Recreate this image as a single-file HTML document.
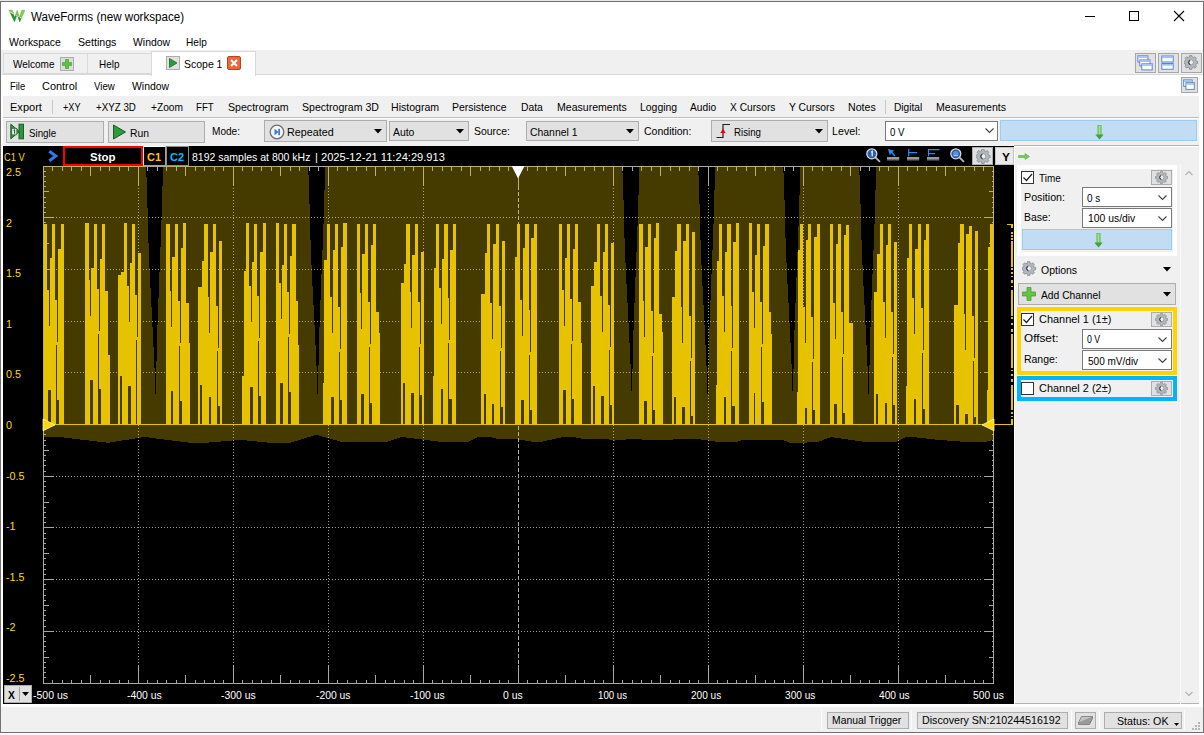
<!DOCTYPE html>
<html><head><meta charset="utf-8"><title>WaveForms (new workspace)</title>
<style>
html,body{margin:0;padding:0;background:#fff;}
body{width:1204px;height:735px;position:relative;overflow:hidden;font-family:"Liberation Sans",sans-serif;}
.b{position:absolute;display:block;}
.t{position:absolute;white-space:pre;display:block;transform-origin:0 0;}
</style></head><body>
<div class="b" style="left:0px;top:0px;width:1204px;height:735px;background:#fff;"></div>
<div class="b" style="left:0px;top:0px;width:1204px;height:1px;background:#e8e8e8;"></div>
<div class="b" style="left:0px;top:1px;width:1204px;height:732px;border:1px solid #707070;box-sizing:border-box;"></div>
<svg class="b" style="left:8px;top:8px;" width="18" height="16" viewBox="0 0 18 16"><defs><clipPath id="wc"><path d="M1 2.200L4.400 2.200L6.600 9.500L9.100 2.200L11.600 9.500L13.800 2.200L16.900 2.200L11.700 14L9.100 6.500L6.500 14Z"/></clipPath></defs><g clip-path="url(#wc)"><rect x="0" y="0" width="18" height="16" fill="#86d238"/><path d="M0 3L18 12.500L18 16L0 16Z" fill="#1f9442"/><path d="M0 3L18 12.500" stroke="#f2fbe8" stroke-width="0.900"/></g><path d="M1 2.200L4.400 2.200L6.600 9.500L9.100 2.200L11.600 9.500L13.800 2.200L16.900 2.200L11.700 14L9.100 6.500L6.500 14Z" fill="none" stroke="#4f7f4a" stroke-width="0.500" stroke-opacity="0.700"/></svg>
<span class="t" style="left:30.70px;top:9.80px;font-size:12px;line-height:14px;color:#000;transform:scaleX(0.9677);">WaveForms (new workspace)</span>
<div class="b" style="left:1085px;top:16px;width:10px;height:1px;background:#000;"></div>
<div class="b" style="left:1129px;top:11px;width:10px;height:10px;border:1px solid #000;box-sizing:border-box;"></div>
<svg class="b" style="left:1173px;top:10px;" width="12" height="12" viewBox="0 0 12 12"><path d="M1 1 L11 11 M11 1 L1 11" stroke="#000" stroke-width="1.1" fill="none"/></svg>
<span class="t" style="left:9.10px;top:35.70px;font-size:11px;line-height:12px;color:#000;transform:scaleX(0.9455);">Workspace</span>
<span class="t" style="left:77.70px;top:35.70px;font-size:11px;line-height:12px;color:#000;transform:scaleX(0.9650);">Settings</span>
<span class="t" style="left:132.90px;top:35.70px;font-size:11px;line-height:12px;color:#000;transform:scaleX(0.9462);">Window</span>
<span class="t" style="left:186.40px;top:35.70px;font-size:11px;line-height:12px;color:#000;transform:scaleX(0.9174);">Help</span>
<div class="b" style="left:1px;top:50px;width:1202px;height:25px;background:#f0f0f0;"></div>
<div class="b" style="left:3px;top:53px;width:85px;height:21px;background:#f0f0f0;border:1px solid #d9d9d9;box-sizing:border-box;"></div>
<div class="b" style="left:87px;top:53px;width:65px;height:21px;background:#f0f0f0;border:1px solid #d9d9d9;box-sizing:border-box;"></div>
<div class="b" style="left:151px;top:51px;width:105px;height:25px;background:#fff;border:1px solid #d9d9d9;box-sizing:border-box;border-bottom:none;"></div>
<div class="b" style="left:256px;top:74px;width:946px;height:1px;background:#d9d9d9;"></div>
<div class="b" style="left:2px;top:74px;width:150px;height:1px;background:#d9d9d9;"></div>
<span class="t" style="left:13.00px;top:58.10px;font-size:11px;line-height:12px;color:#000;transform:scaleX(0.9087);">Welcome</span>
<div class="b" style="left:60px;top:57px;width:14px;height:14px;background:#dcdcdc;border:1px solid #adadad;box-sizing:border-box;"></div>
<svg class="b" style="left:61px;top:58px;" width="12" height="12" viewBox="0 0 12 12"><path d="M4.5 1.5h3v3h3v3h-3v3h-3v-3h-3v-3h3z" fill="#5cc043" stroke="#3d9a2a" stroke-width="0.6"/></svg>
<span class="t" style="left:99.20px;top:58.10px;font-size:11px;line-height:12px;color:#000;transform:scaleX(0.9043);">Help</span>
<div class="b" style="left:166px;top:56px;width:14px;height:14px;background:#e1e1e1;border:1px solid #adadad;box-sizing:border-box;"></div>
<svg class="b" style="left:167px;top:57px;" width="12" height="12" viewBox="0 0 12 12"><path d="M2.5 1.5 L10 6 L2.5 10.5Z" fill="#2f9a3b" stroke="#1c6b27" stroke-width="0.8"/></svg>
<span class="t" style="left:184.40px;top:58.10px;font-size:11px;line-height:12px;color:#000;transform:scaleX(0.9525);">Scope 1</span>
<div class="b" style="left:227px;top:56px;width:14px;height:14px;background:#e9683c;border:1px solid #b8431f;box-sizing:border-box;border-radius:2px;"></div>
<svg class="b" style="left:228px;top:57px;" width="12" height="12" viewBox="0 0 12 12"><path d="M3 3 L9 9 M9 3 L3 9" stroke="#fff" stroke-width="2" fill="none"/></svg>
<div class="b" style="left:1135px;top:53px;width:21px;height:20px;background:#e1e1e1;border:1px solid #a6a6a6;box-sizing:border-box;"></div>
<svg class="b" style="left:1135px;top:53px;" width="21" height="20" viewBox="0 0 21 20"><rect x="2.9" y="2.8" width="10" height="6.3" fill="#fff" stroke="#5a86d2" stroke-width="1"/><rect x="3.4" y="3.3" width="9" height="1.600" fill="#9dbfee"/><rect x="4.8" y="6.9" width="10.2" height="6" fill="#fff" stroke="#5a86d2" stroke-width="1"/><rect x="5.3" y="7.4" width="9.2" height="1.600" fill="#9dbfee"/><rect x="6.8" y="10.8" width="10.4" height="6.1" fill="#fff" stroke="#5a86d2" stroke-width="1"/><rect x="7.3" y="11.3" width="9.4" height="1.600" fill="#9dbfee"/></svg>
<div class="b" style="left:1158px;top:53px;width:21px;height:20px;background:#e1e1e1;border:1px solid #a6a6a6;box-sizing:border-box;"></div>
<svg class="b" style="left:1158px;top:53px;" width="21" height="20" viewBox="0 0 21 20"><rect x="3.8" y="3" width="11.4" height="6" fill="#fff" stroke="#5a86d2" stroke-width="1"/><rect x="4.3" y="3.5" width="10.4" height="1.600" fill="#9dbfee"/><rect x="3.8" y="10.5" width="11.4" height="5.8" fill="#fff" stroke="#5a86d2" stroke-width="1"/><rect x="4.3" y="11" width="10.4" height="1.600" fill="#9dbfee"/></svg>
<div class="b" style="left:1181px;top:53px;width:21px;height:20px;background:#e1e1e1;border:1px solid #a6a6a6;box-sizing:border-box;"></div>
<svg class="b" style="left:1183.5px;top:55px;" width="15" height="15" viewBox="0 0 15 15"><g transform="translate(0.3,0.2) scale(0.92)"><path d="M5.800 0.300h2.400l.4 1.800 1.300.55 1.600-1 1.700 1.700-1 1.600.55 1.300 1.800.4v2.400l-1.800.4-.55 1.300 1 1.600-1.700 1.700-1.600-1-1.300.55-.4 1.800H5.800l-.4-1.800-1.300-.55-1.600 1-1.700-1.700 1-1.600-.55-1.300-1.800-.4V6.650l1.800-.4.550-1.300-1-1.600 1.700-1.700 1.600 1 1.300-.55z" fill="#b4b8bd" stroke="#80868d" stroke-width="0.800"/><circle cx="7" cy="7.700" r="2.900" fill="#eceef0" stroke="#7a8087" stroke-width="0.700"/><path d="M6.200 5.200a2.800 2.800 0 0 0 0.300 5.200a3.600 3.600 0 0 1 -0.300 -5.200z" fill="#3c4650" stroke="#3c4650" stroke-width="0.900"/></g></svg>
<span class="t" style="left:10.30px;top:79.70px;font-size:11px;line-height:12px;color:#000;transform:scaleX(0.8556);">File</span>
<span class="t" style="left:42.40px;top:79.70px;font-size:11px;line-height:12px;color:#000;transform:scaleX(0.9943);">Control</span>
<span class="t" style="left:93.90px;top:79.70px;font-size:11px;line-height:12px;color:#000;transform:scaleX(0.8792);">View</span>
<span class="t" style="left:132.00px;top:79.70px;font-size:11px;line-height:12px;color:#000;transform:scaleX(0.9487);">Window</span>
<div class="b" style="left:1181px;top:77px;width:17px;height:16px;background:#e1e1e1;border:1px solid #a6a6a6;box-sizing:border-box;"></div>
<svg class="b" style="left:1181px;top:77px;" width="17" height="16" viewBox="0 0 17 16"><rect x="2.7" y="2.9" width="8.4" height="6.5" fill="#fff" stroke="#5a86d2" stroke-width="1"/><rect x="3.2" y="3.4" width="7.4" height="1.600" fill="#9dbfee"/><rect x="4.9" y="5.7" width="8.4" height="6.7" fill="#fff" stroke="#5a86d2" stroke-width="1"/><rect x="5.4" y="6.2" width="7.4" height="1.600" fill="#9dbfee"/></svg>
<div class="b" style="left:3px;top:96px;width:1196px;height:21px;background:#f0f0f0;"></div>
<div class="b" style="left:3px;top:117px;width:1196px;height:1px;background:#bdbdbd;"></div>
<div class="b" style="left:3px;top:118px;width:1196px;height:28px;background:#f0f0f0;"></div>
<div class="b" style="left:3px;top:118px;width:1196px;height:1px;background:#fff;"></div>
<span class="t" style="left:10.30px;top:100.50px;font-size:11px;line-height:12px;color:#000;transform:scaleX(1.0031);">Export</span>
<span class="t" style="left:63.10px;top:100.50px;font-size:11px;line-height:12px;color:#000;transform:scaleX(0.8318);">+XY</span>
<span class="t" style="left:96.00px;top:100.50px;font-size:11px;line-height:12px;color:#000;transform:scaleX(0.8867);">+XYZ 3D</span>
<span class="t" style="left:150.80px;top:100.50px;font-size:11px;line-height:12px;color:#000;transform:scaleX(0.9257);">+Zoom</span>
<span class="t" style="left:196.40px;top:100.50px;font-size:11px;line-height:12px;color:#000;transform:scaleX(0.8750);">FFT</span>
<span class="t" style="left:227.50px;top:100.50px;font-size:11px;line-height:12px;color:#000;transform:scaleX(0.9635);">Spectrogram</span>
<span class="t" style="left:301.50px;top:100.50px;font-size:11px;line-height:12px;color:#000;transform:scaleX(0.9600);">Spectrogram 3D</span>
<span class="t" style="left:391.30px;top:100.50px;font-size:11px;line-height:12px;color:#000;transform:scaleX(0.9600);">Histogram</span>
<span class="t" style="left:452.00px;top:100.50px;font-size:11px;line-height:12px;color:#000;transform:scaleX(0.9500);">Persistence</span>
<span class="t" style="left:520.50px;top:100.50px;font-size:11px;line-height:12px;color:#000;transform:scaleX(0.9375);">Data</span>
<span class="t" style="left:556.50px;top:100.50px;font-size:11px;line-height:12px;color:#000;transform:scaleX(0.9589);">Measurements</span>
<span class="t" style="left:639.50px;top:100.50px;font-size:11px;line-height:12px;color:#000;transform:scaleX(0.9487);">Logging</span>
<span class="t" style="left:690.00px;top:100.50px;font-size:11px;line-height:12px;color:#000;transform:scaleX(0.9286);">Audio</span>
<span class="t" style="left:729.50px;top:100.50px;font-size:11px;line-height:12px;color:#000;transform:scaleX(0.9286);">X Cursors</span>
<span class="t" style="left:788.50px;top:100.50px;font-size:11px;line-height:12px;color:#000;transform:scaleX(0.9388);">Y Cursors</span>
<span class="t" style="left:847.50px;top:100.50px;font-size:11px;line-height:12px;color:#000;transform:scaleX(0.9655);">Notes</span>
<span class="t" style="left:894.40px;top:100.50px;font-size:11px;line-height:12px;color:#000;transform:scaleX(0.9226);">Digital</span>
<span class="t" style="left:936.20px;top:100.50px;font-size:11px;line-height:12px;color:#000;transform:scaleX(0.9630);">Measurements</span>
<div class="b" style="left:52px;top:100px;width:1px;height:14px;background:#c8c8c8;"></div>
<div class="b" style="left:885px;top:100px;width:1px;height:14px;background:#c8c8c8;"></div>
<div class="b" style="left:6px;top:121px;width:98px;height:22px;background:#e1e1e1;border:1px solid #adadad;box-sizing:border-box;"></div>
<svg class="b" style="left:10px;top:123px;" width="15" height="17" viewBox="0 0 15 17"><path d="M0.800 1.200 L9.500 8.500 L0.800 15.800Z" fill="#2f9440" stroke="#1d5e29" stroke-width="1"/><rect x="9" y="1.200" width="4.500" height="14.600" fill="#2f9440" stroke="#1d5e29" stroke-width="1"/><rect x="1.800" y="5.500" width="5" height="6.300" fill="#e4efe5" stroke="#2a5a33" stroke-width="0.600"/><path d="M3.600 7.300l1-.6v4" stroke="#1a3a20" stroke-width="0.900" fill="none"/></svg>
<span class="t" style="left:28.60px;top:126.50px;font-size:11px;line-height:12px;color:#000;transform:scaleX(0.8871);">Single</span>
<div class="b" style="left:108px;top:121px;width:97px;height:22px;background:#e1e1e1;border:1px solid #adadad;box-sizing:border-box;"></div>
<svg class="b" style="left:112px;top:124px;" width="15" height="16" viewBox="0 0 15 16"><path d="M1.5 1 L13.5 8 L1.5 15Z" fill="#2f9a3b" stroke="#1a5a24" stroke-width="1"/></svg>
<span class="t" style="left:130.40px;top:126.50px;font-size:11px;line-height:12px;color:#000;transform:scaleX(0.9400);">Run</span>
<span class="t" style="left:212.00px;top:124.90px;font-size:11px;line-height:12px;color:#000;transform:scaleX(0.9161);">Mode:</span>
<div class="b" style="left:264px;top:120px;width:123px;height:22px;background:#e1e1e1;border:1px solid #adadad;box-sizing:border-box;"></div>
<svg class="b" style="left:269px;top:124px;" width="16" height="16" viewBox="0 0 16 16"><circle cx="8" cy="8" r="6.8" fill="#f4f6fa" stroke="#6a6f78" stroke-width="1.3"/><path d="M5.5 4.800 L9.500 8 L5.500 11.200Z" fill="#3b7bd6"/><rect x="9.3" y="4.800" width="1.700" height="6.400" fill="#3b7bd6"/></svg>
<span class="t" style="left:287.20px;top:125.50px;font-size:11px;line-height:12px;color:#000;transform:scaleX(0.9771);">Repeated</span>
<svg class="b" style="left:373.5px;top:129px;" width="8" height="5" viewBox="0 0 8 5"><path d="M0 0h8l-4 4.500z" fill="#000"/></svg>
<div class="b" style="left:389px;top:121px;width:80px;height:20px;background:#e1e1e1;border:1px solid #adadad;box-sizing:border-box;"></div>
<span class="t" style="left:393.10px;top:125.50px;font-size:11px;line-height:12px;color:#000;transform:scaleX(0.9435);">Auto</span>
<svg class="b" style="left:455.5px;top:129px;" width="8" height="5" viewBox="0 0 8 5"><path d="M0 0h8l-4 4.500z" fill="#000"/></svg>
<span class="t" style="left:473.70px;top:124.90px;font-size:11px;line-height:12px;color:#000;transform:scaleX(0.9500);">Source:</span>
<div class="b" style="left:526px;top:121px;width:113px;height:20px;background:#e1e1e1;border:1px solid #adadad;box-sizing:border-box;"></div>
<span class="t" style="left:529.80px;top:125.50px;font-size:11px;line-height:12px;color:#000;transform:scaleX(0.9460);">Channel 1</span>
<svg class="b" style="left:625.5px;top:129px;" width="8" height="5" viewBox="0 0 8 5"><path d="M0 0h8l-4 4.500z" fill="#000"/></svg>
<span class="t" style="left:643.90px;top:124.90px;font-size:11px;line-height:12px;color:#000;transform:scaleX(0.9560);">Condition:</span>
<div class="b" style="left:711px;top:120px;width:117px;height:22px;background:#e1e1e1;border:1px solid #adadad;box-sizing:border-box;"></div>
<svg class="b" style="left:716px;top:123px;" width="17" height="16" viewBox="0 0 17 16"><path d="M0.500 14.500h6.500v-13h7" stroke="#222" stroke-width="1.200" fill="none"/><path d="M7 5.500l2.600 4.500h-5.200z" fill="#e00"/></svg>
<span class="t" style="left:734.40px;top:125.50px;font-size:11px;line-height:12px;color:#000;transform:scaleX(0.8839);">Rising</span>
<svg class="b" style="left:814.5px;top:129px;" width="8" height="5" viewBox="0 0 8 5"><path d="M0 0h8l-4 4.500z" fill="#000"/></svg>
<span class="t" style="left:832.30px;top:124.90px;font-size:11px;line-height:12px;color:#000;transform:scaleX(0.9724);">Level:</span>
<div class="b" style="left:885px;top:121px;width:113px;height:20px;background:#fff;border:1px solid #7a7a7a;box-sizing:border-box;"></div>
<span class="t" style="left:889.90px;top:125.50px;font-size:11px;line-height:12px;color:#000;transform:scaleX(0.8765);">0 V</span>
<svg class="b" style="left:984.5px;top:128px;" width="9" height="6" viewBox="0 0 9 6"><path d="M0.500 0.500l4 4 4-4" stroke="#444" stroke-width="1.100" fill="none"/></svg>
<div class="b" style="left:1000px;top:120px;width:197px;height:21px;background:#c2dcf3;border:1px solid #99cdf5;box-sizing:border-box;"></div>
<svg class="b" style="left:1094.5px;top:125px;" width="9" height="15" viewBox="0 0 9 15"><rect x="2.500" y="0" width="4" height="10" fill="#58b548"/><rect x="3.500" y="0.500" width="2" height="9.500" fill="#a5e090"/><path d="M0.300 9.500h8.400l-4.200 5z" fill="#45a03a"/></svg>
<div class="b" style="left:3px;top:146px;width:1011px;height:558px;background:#000;"></div>
<span class="t" style="left:3.90px;top:150.70px;font-size:11px;line-height:12px;color:#ffdc00;transform:scaleX(0.8440);">C1 V</span>
<svg class="b" style="left:47px;top:149px;" width="12" height="14" viewBox="0 0 12 14"><path d="M2.300 2.200 L8.800 7 L2.300 11.800" stroke="#2f7bea" stroke-width="3" fill="none" stroke-linejoin="miter"/></svg>
<div class="b" style="left:63px;top:146px;width:80px;height:20px;background:#000;border:2px solid #f00;box-sizing:border-box;"></div>
<span class="t" style="left:90.00px;top:150.60px;font-size:11px;line-height:12px;color:#fff;transform:scaleX(1.0400);font-weight:bold;">Stop</span>
<div class="b" style="left:143px;top:146px;width:23px;height:20px;background:#000;border:1px solid #a0a0a0;box-sizing:border-box;border-top-color:#fff;border-left-color:#fff;"></div>
<span class="t" style="left:147.00px;top:150.90px;font-size:11px;line-height:12px;color:#ffc800;transform:scaleX(0.9929);font-weight:bold;">C1</span>
<div class="b" style="left:166px;top:146px;width:23px;height:20px;background:#000;border:1px solid #8c8c8c;box-sizing:border-box;"></div>
<span class="t" style="left:169.90px;top:150.90px;font-size:11px;line-height:12px;color:#00beff;transform:scaleX(0.9929);font-weight:bold;">C2</span>
<span class="t" style="left:191.90px;top:151.00px;font-size:11px;line-height:12px;color:#fff;transform:scaleX(0.9540);">8192 samples at 800 kHz</span>
<span class="t" style="left:315.30px;top:151.00px;font-size:11px;line-height:12px;color:#fff;transform:scaleX(1.0093);">| 2025-12-21 11:24:29.913</span>
<svg class="b" style="left:0px;top:0px;shape-rendering:crispEdges;" width="1014" height="704" viewBox="0 0 1014 704"><line x1="138.50" y1="187.5" x2="138.50" y2="673.5" stroke="#9c9c9c" stroke-width="1" stroke-dasharray="1 2"/><line x1="55.5" y1="217.50" x2="982.5" y2="217.50" stroke="#9c9c9c" stroke-width="1" stroke-dasharray="1 2"/><line x1="233.50" y1="187.5" x2="233.50" y2="673.5" stroke="#9c9c9c" stroke-width="1" stroke-dasharray="1 2"/><line x1="55.5" y1="269.50" x2="982.5" y2="269.50" stroke="#9c9c9c" stroke-width="1" stroke-dasharray="1 2"/><line x1="328.50" y1="187.5" x2="328.50" y2="673.5" stroke="#9c9c9c" stroke-width="1" stroke-dasharray="1 2"/><line x1="55.5" y1="321.50" x2="982.5" y2="321.50" stroke="#9c9c9c" stroke-width="1" stroke-dasharray="1 2"/><line x1="423.50" y1="187.5" x2="423.50" y2="673.5" stroke="#9c9c9c" stroke-width="1" stroke-dasharray="1 2"/><line x1="55.5" y1="372.50" x2="982.5" y2="372.50" stroke="#9c9c9c" stroke-width="1" stroke-dasharray="1 2"/><line x1="518.50" y1="185.5" x2="518.50" y2="673.5" stroke="#b0b0b0" stroke-width="1" stroke-dasharray="4 2"/><line x1="55.5" y1="424.50" x2="982.5" y2="424.50" stroke="#9c9c9c" stroke-width="1" stroke-dasharray="1 2"/><line x1="613.50" y1="187.5" x2="613.50" y2="673.5" stroke="#9c9c9c" stroke-width="1" stroke-dasharray="1 2"/><line x1="55.5" y1="476.50" x2="982.5" y2="476.50" stroke="#9c9c9c" stroke-width="1" stroke-dasharray="1 2"/><line x1="708.50" y1="187.5" x2="708.50" y2="673.5" stroke="#9c9c9c" stroke-width="1" stroke-dasharray="1 2"/><line x1="55.5" y1="527.50" x2="982.5" y2="527.50" stroke="#9c9c9c" stroke-width="1" stroke-dasharray="1 2"/><line x1="803.50" y1="187.5" x2="803.50" y2="673.5" stroke="#9c9c9c" stroke-width="1" stroke-dasharray="1 2"/><line x1="55.5" y1="579.50" x2="982.5" y2="579.50" stroke="#9c9c9c" stroke-width="1" stroke-dasharray="1 2"/><line x1="898.50" y1="187.5" x2="898.50" y2="673.5" stroke="#9c9c9c" stroke-width="1" stroke-dasharray="1 2"/><line x1="55.5" y1="631.50" x2="982.5" y2="631.50" stroke="#9c9c9c" stroke-width="1" stroke-dasharray="1 2"/><path d="M43.5 166.5H993.5V683.5H43.5ZM43.50 166.5v19M43.50 683.5v-19M52.50 166.5v4M52.50 683.5v-4M62.50 166.5v4M62.50 683.5v-4M71.50 166.5v4M71.50 683.5v-4M81.50 166.5v4M81.50 683.5v-4M90.50 166.5v9M90.50 683.5v-9M100.50 166.5v4M100.50 683.5v-4M109.50 166.5v4M109.50 683.5v-4M119.50 166.5v4M119.50 683.5v-4M128.50 166.5v4M128.50 683.5v-4M138.50 166.5v19M138.50 683.5v-19M147.50 166.5v4M147.50 683.5v-4M157.50 166.5v4M157.50 683.5v-4M166.50 166.5v4M166.50 683.5v-4M176.50 166.5v4M176.50 683.5v-4M185.50 166.5v9M185.50 683.5v-9M195.50 166.5v4M195.50 683.5v-4M204.50 166.5v4M204.50 683.5v-4M214.50 166.5v4M214.50 683.5v-4M223.50 166.5v4M223.50 683.5v-4M233.50 166.5v19M233.50 683.5v-19M242.50 166.5v4M242.50 683.5v-4M252.50 166.5v4M252.50 683.5v-4M261.50 166.5v4M261.50 683.5v-4M271.50 166.5v4M271.50 683.5v-4M280.50 166.5v9M280.50 683.5v-9M290.50 166.5v4M290.50 683.5v-4M299.50 166.5v4M299.50 683.5v-4M309.50 166.5v4M309.50 683.5v-4M318.50 166.5v4M318.50 683.5v-4M328.50 166.5v19M328.50 683.5v-19M337.50 166.5v4M337.50 683.5v-4M347.50 166.5v4M347.50 683.5v-4M356.50 166.5v4M356.50 683.5v-4M366.50 166.5v4M366.50 683.5v-4M375.50 166.5v9M375.50 683.5v-9M385.50 166.5v4M385.50 683.5v-4M394.50 166.5v4M394.50 683.5v-4M404.50 166.5v4M404.50 683.5v-4M413.50 166.5v4M413.50 683.5v-4M423.50 166.5v19M423.50 683.5v-19M432.50 166.5v4M432.50 683.5v-4M442.50 166.5v4M442.50 683.5v-4M451.50 166.5v4M451.50 683.5v-4M461.50 166.5v4M461.50 683.5v-4M470.50 166.5v9M470.50 683.5v-9M480.50 166.5v4M480.50 683.5v-4M489.50 166.5v4M489.50 683.5v-4M499.50 166.5v4M499.50 683.5v-4M508.50 166.5v4M508.50 683.5v-4M518.50 166.5v19M518.50 683.5v-19M527.50 166.5v4M527.50 683.5v-4M537.50 166.5v4M537.50 683.5v-4M546.50 166.5v4M546.50 683.5v-4M556.50 166.5v4M556.50 683.5v-4M565.50 166.5v9M565.50 683.5v-9M575.50 166.5v4M575.50 683.5v-4M584.50 166.5v4M584.50 683.5v-4M594.50 166.5v4M594.50 683.5v-4M603.50 166.5v4M603.50 683.5v-4M613.50 166.5v19M613.50 683.5v-19M622.50 166.5v4M622.50 683.5v-4M632.50 166.5v4M632.50 683.5v-4M641.50 166.5v4M641.50 683.5v-4M651.50 166.5v4M651.50 683.5v-4M660.50 166.5v9M660.50 683.5v-9M670.50 166.5v4M670.50 683.5v-4M679.50 166.5v4M679.50 683.5v-4M689.50 166.5v4M689.50 683.5v-4M698.50 166.5v4M698.50 683.5v-4M708.50 166.5v19M708.50 683.5v-19M717.50 166.5v4M717.50 683.5v-4M727.50 166.5v4M727.50 683.5v-4M736.50 166.5v4M736.50 683.5v-4M746.50 166.5v4M746.50 683.5v-4M755.50 166.5v9M755.50 683.5v-9M765.50 166.5v4M765.50 683.5v-4M774.50 166.5v4M774.50 683.5v-4M784.50 166.5v4M784.50 683.5v-4M793.50 166.5v4M793.50 683.5v-4M803.50 166.5v19M803.50 683.5v-19M812.50 166.5v4M812.50 683.5v-4M822.50 166.5v4M822.50 683.5v-4M831.50 166.5v4M831.50 683.5v-4M841.50 166.5v4M841.50 683.5v-4M850.50 166.5v9M850.50 683.5v-9M860.50 166.5v4M860.50 683.5v-4M869.50 166.5v4M869.50 683.5v-4M879.50 166.5v4M879.50 683.5v-4M888.50 166.5v4M888.50 683.5v-4M898.50 166.5v19M898.50 683.5v-19M907.50 166.5v4M907.50 683.5v-4M917.50 166.5v4M917.50 683.5v-4M926.50 166.5v4M926.50 683.5v-4M936.50 166.5v4M936.50 683.5v-4M945.50 166.5v9M945.50 683.5v-9M955.50 166.5v4M955.50 683.5v-4M964.50 166.5v4M964.50 683.5v-4M974.50 166.5v4M974.50 683.5v-4M983.50 166.5v4M983.50 683.5v-4M993.50 166.5v19M993.50 683.5v-19M43.5 166.50h10M993.5 166.50h-10M43.5 171.50h2M993.5 171.50h-2M43.5 176.50h2M993.5 176.50h-2M43.5 181.50h2M993.5 181.50h-2M43.5 186.50h2M993.5 186.50h-2M43.5 191.50h5M993.5 191.50h-5M43.5 197.50h2M993.5 197.50h-2M43.5 202.50h2M993.5 202.50h-2M43.5 207.50h2M993.5 207.50h-2M43.5 212.50h2M993.5 212.50h-2M43.5 217.50h10M993.5 217.50h-10M43.5 222.50h2M993.5 222.50h-2M43.5 228.50h2M993.5 228.50h-2M43.5 233.50h2M993.5 233.50h-2M43.5 238.50h2M993.5 238.50h-2M43.5 243.50h5M993.5 243.50h-5M43.5 248.50h2M993.5 248.50h-2M43.5 253.50h2M993.5 253.50h-2M43.5 259.50h2M993.5 259.50h-2M43.5 264.50h2M993.5 264.50h-2M43.5 269.50h10M993.5 269.50h-10M43.5 274.50h2M993.5 274.50h-2M43.5 279.50h2M993.5 279.50h-2M43.5 284.50h2M993.5 284.50h-2M43.5 290.50h2M993.5 290.50h-2M43.5 295.50h5M993.5 295.50h-5M43.5 300.50h2M993.5 300.50h-2M43.5 305.50h2M993.5 305.50h-2M43.5 310.50h2M993.5 310.50h-2M43.5 315.50h2M993.5 315.50h-2M43.5 321.50h10M993.5 321.50h-10M43.5 326.50h2M993.5 326.50h-2M43.5 331.50h2M993.5 331.50h-2M43.5 336.50h2M993.5 336.50h-2M43.5 341.50h2M993.5 341.50h-2M43.5 346.50h5M993.5 346.50h-5M43.5 352.50h2M993.5 352.50h-2M43.5 357.50h2M993.5 357.50h-2M43.5 362.50h2M993.5 362.50h-2M43.5 367.50h2M993.5 367.50h-2M43.5 372.50h10M993.5 372.50h-10M43.5 377.50h2M993.5 377.50h-2M43.5 383.50h2M993.5 383.50h-2M43.5 388.50h2M993.5 388.50h-2M43.5 393.50h2M993.5 393.50h-2M43.5 398.50h5M993.5 398.50h-5M43.5 403.50h2M993.5 403.50h-2M43.5 408.50h2M993.5 408.50h-2M43.5 414.50h2M993.5 414.50h-2M43.5 419.50h2M993.5 419.50h-2M43.5 424.50h10M993.5 424.50h-10M43.5 429.50h2M993.5 429.50h-2M43.5 434.50h2M993.5 434.50h-2M43.5 440.50h2M993.5 440.50h-2M43.5 445.50h2M993.5 445.50h-2M43.5 450.50h5M993.5 450.50h-5M43.5 455.50h2M993.5 455.50h-2M43.5 460.50h2M993.5 460.50h-2M43.5 465.50h2M993.5 465.50h-2M43.5 471.50h2M993.5 471.50h-2M43.5 476.50h10M993.5 476.50h-10M43.5 481.50h2M993.5 481.50h-2M43.5 486.50h2M993.5 486.50h-2M43.5 491.50h2M993.5 491.50h-2M43.5 496.50h2M993.5 496.50h-2M43.5 502.50h5M993.5 502.50h-5M43.5 507.50h2M993.5 507.50h-2M43.5 512.50h2M993.5 512.50h-2M43.5 517.50h2M993.5 517.50h-2M43.5 522.50h2M993.5 522.50h-2M43.5 527.50h10M993.5 527.50h-10M43.5 533.50h2M993.5 533.50h-2M43.5 538.50h2M993.5 538.50h-2M43.5 543.50h2M993.5 543.50h-2M43.5 548.50h2M993.5 548.50h-2M43.5 553.50h5M993.5 553.50h-5M43.5 558.50h2M993.5 558.50h-2M43.5 564.50h2M993.5 564.50h-2M43.5 569.50h2M993.5 569.50h-2M43.5 574.50h2M993.5 574.50h-2M43.5 579.50h10M993.5 579.50h-10M43.5 584.50h2M993.5 584.50h-2M43.5 589.50h2M993.5 589.50h-2M43.5 595.50h2M993.5 595.50h-2M43.5 600.50h2M993.5 600.50h-2M43.5 605.50h5M993.5 605.50h-5M43.5 610.50h2M993.5 610.50h-2M43.5 615.50h2M993.5 615.50h-2M43.5 620.50h2M993.5 620.50h-2M43.5 626.50h2M993.5 626.50h-2M43.5 631.50h10M993.5 631.50h-10M43.5 636.50h2M993.5 636.50h-2M43.5 641.50h2M993.5 641.50h-2M43.5 646.50h2M993.5 646.50h-2M43.5 651.50h2M993.5 651.50h-2M43.5 657.50h5M993.5 657.50h-5M43.5 662.50h2M993.5 662.50h-2M43.5 667.50h2M993.5 667.50h-2M43.5 672.50h2M993.5 672.50h-2M43.5 677.50h2M993.5 677.50h-2M43.5 683.50h10M993.5 683.50h-10" stroke="#a8a8a8" stroke-width="1" fill="none"/><path fill="#E6C200" fill-opacity="0.3" fill-rule="evenodd" d="M43 166L994 166L994 439.8L983 442.3L971 442.3L938 439.8L913 437L906 437L896 442.3L868 442.3L833 437.3L831 437L819 441.5L803 442.8L790 442.8L783 440L743 440L735 442.3L720 442.3L698 439L693 439L653 440L631 439L614 440.6L606 439L583 439L573 437L563 437L543 441.5L531 441.5L515 439L498 439L490 437L478 437L468 442.3L440 441.8L402 437L385 442.3L343 442.3L316.4 434.8L290 442.8L270 442.8L240 439.8L206 442.8L190 442.8L144.6 437L108 442.8L62 437.3L43 437.3ZM146 166L147.1 190L148 230L149.6 270L151.3 303L153 336.4L154.6 369.7L155.4 394L155.8 394L156.3 369.7L157.1 336.4L158.3 303L159.6 270L161.2 230L162.3 195L163 166ZM308.1 166L309.2 190L310.1 230L311.7 270L313.4 303L315.1 336.4L316.7 369.7L317.5 394L317.9 394L318.4 369.7L319.2 336.4L320.4 303L321.7 270L323.3 230L324.4 195L325.1 166ZM622.2 166L623.3 190L624.2 230L625.8 270L627.5 303L629.2 336.4L630.8 369.7L631.6 394L632 394L632.5 369.7L633.3 336.4L634.5 303L635.8 270L637.4 230L638.5 195L639.2 166ZM698.1 166L699.2 190L700.1 230L701.7 270L703.4 303L705.1 336.4L706.7 369.7L707.5 394L707.9 394L708.4 369.7L709.2 336.4L710.4 303L711.7 270L713.3 230L714.4 195L715.1 166ZM783.2 166L784.3 190L785.2 230L786.8 270L788.5 303L790.2 336.4L791.8 369.7L792.6 394L793 394L793.5 369.7L794.3 336.4L795.5 303L796.8 270L798.4 230L799.5 195L800.2 166ZM859.1 166L860.2 190L861.1 230L862.7 270L864.4 303L866.1 336.4L867.7 369.7L868.5 394L868.9 394L869.4 369.7L870.2 336.4L871.4 303L872.7 270L874.3 230L875.4 195L876.1 166Z"/><path fill="#E6C200" d="M43.5 223.6H47V425H43.5ZM47 289.6H50V425H47ZM50 258H52V425H50ZM52 223.6H55V425H52ZM55 300H58V425H55ZM58 249H60.8V425H58ZM60.8 223.6H64.1V425H60.8ZM84.8 222.8H89V425H84.8ZM89 279.6H91V425H89ZM91 268H94V425H91ZM94 223.6H97V425H94ZM97 288.6H99.8V425H97ZM99.8 258.8H102V425H99.8ZM102 223.6H105V425H102ZM105 290.8H107.8V425H105ZM107.8 354.7H109.8V425H107.8ZM118 274.6H121.4V425H118ZM121.4 272H124.2V425H121.4ZM124.2 222.8H127.2V425H124.2ZM127.2 285.8H129.7V425H127.2ZM129.7 263H132.2V425H129.7ZM132.2 223.6H135V425H132.2ZM135 295H138V425H135ZM138 253H141V425H138ZM165.9 223.6H170V425H165.9ZM170 290.8H172V425H170ZM172 257H174.9V425H172ZM174.9 223.6H177.9V425H174.9ZM177.9 300.7H180.9V425H177.9ZM180.9 247.7H182.9V425H180.9ZM182.9 222.8H185.8V425H182.9ZM185.8 303H188.7V425H185.8ZM188.7 343H190.3V425H188.7ZM197.8 286.6H202V425H197.8ZM202 260.5H204.1V425H202ZM204.1 223.6H207.8V425H204.1ZM207.8 296.6H209.8V425H207.8ZM209.8 251.9H212.8V425H209.8ZM212.8 223.6H216.1V425H212.8ZM216.1 305.7H218.9V425H216.1ZM218.9 241.4H222.2V425H218.9ZM241.7 376H244.2V425H241.7ZM244.2 271H246.1V425H244.2ZM246.1 222.8H249.1V425H246.1ZM249.1 285.8H252V425H249.1ZM252 261.7H254.1V425H252ZM254.1 223.6H257.1V425H254.1ZM257.1 295.7H259.9V425H257.1ZM259.9 251.9H262.9V425H259.9ZM262.9 222.8H266.2V425H262.9ZM275.7 222.8H279V425H275.7ZM279 282.5H282V425H279ZM282 265H284V425H282ZM284 223.6H287V425H284ZM287 291.6H289.8V425H287ZM289.8 256H292V425H289.8ZM292 223.6H296.1V425H292ZM296.1 300.7H297.8V425H296.1ZM297.8 344.7H299V425H297.8ZM322.6 383H323.9V425H322.6ZM323.9 259.7H326.9V425H323.9ZM326.9 223.6H330V425H326.9ZM330 297.4H333V425H330ZM333 249.7H335V425H333ZM335 223.6H338V425H335ZM338 306.5H341V425H338ZM341 246.9H343V425H341ZM343 222.8H347.1V425H343ZM356.8 223.6H359.9V425H356.8ZM359.9 293.3H362.1V425H359.9ZM362.1 253.9H364.9V425H362.1ZM364.9 223.6H367.9V425H364.9ZM367.9 302.4H370.9V425H367.9ZM370.9 245H372.9V425H370.9ZM372.9 223.6H376.2V425H372.9ZM376.2 312.4H379.2V425H376.2ZM379.2 333H380V425H379.2ZM400.8 282.5H404.1V425H400.8ZM404.1 263.8H405.8V425H404.1ZM405.8 223.6H409.8V425H405.8ZM409.8 292.4H411.9V425H409.8ZM411.9 254.7H414.8V425H411.9ZM414.8 223.6H418.1V425H414.8ZM418.1 301.6H420.7V425H418.1ZM420.7 251.9H424V425H420.7ZM432.7 376H433.5V425H432.7ZM433.5 268H436V425H433.5ZM436 223.6H439V425H436ZM439 288.3H442V425H439ZM442 259.3H444.2V425H442ZM444.2 223.6H448V425H444.2ZM448 298.2H450.3V425H448ZM450.3 250H453V425H450.3ZM453 223.6H456.1V425H453ZM481.2 294H484.9V425H481.2ZM484.9 253H487V425H484.9ZM487 223.6H490.2V425H487ZM490.2 303.2H493.2V425H490.2ZM493.2 244.2H496V425H493.2ZM496 223.6H499V425H496ZM499 305.7H502V425H499ZM502 241H505.1V425H502ZM515.1 256.8H517.2V425H515.1ZM517.2 223.6H520.2V425H517.2ZM520.2 299.6H523.1V425H520.2ZM523.1 248H525.2V425H523.1ZM525.2 223.6H529.2V425H525.2ZM529.2 309.5H531V425H529.2ZM531 238H534.2V425H531ZM534.2 223.6H537.2V425H534.2ZM559.1 223.6H562.1V425H559.1ZM562.1 289.6H564.9V425H562.1ZM564.9 258H567.1V425H564.9ZM567.1 223.6H570.1V425H567.1ZM570.1 299H572.9V425H570.1ZM572.9 249.2H575V425H572.9ZM575 223.6H578.2V425H575ZM578.2 301.6H581.2V425H578.2ZM581.2 343H582V425H581.2ZM590.8 285.8H594.2V425H590.8ZM594.2 261.8H597V425H594.2ZM597 223.6H600V425H597ZM600 295.7H603.1V425H600ZM603.1 251.9H604.9V425H603.1ZM604.9 223.6H608.1V425H604.9ZM608.1 304.5H611.1V425H608.1ZM611.1 243H614.1V425H611.1ZM639.3 223.6H643V425H639.3ZM643 300.7H645V425H643ZM645 246.7H648V425H645ZM648 223.6H651.1V425H648ZM651.1 310.7H654.1V425H651.1ZM654.1 237.7H656.1V425H654.1ZM656.1 222.8H659.1V425H656.1ZM659.1 314H662V425H659.1ZM662 332.3H663.3V425H662ZM671.9 296.6H674.9V425H671.9ZM674.9 251H676.9V425H674.9ZM676.9 223.6H681V425H676.9ZM681 306.5H683.2V425H681ZM683.2 240.9H686V425H683.2ZM686 223.6H689V425H686ZM689 315.7H692V425H689ZM692 232H695.1V425H692ZM716.1 384.6H716.9V425H716.1ZM716.9 261H718.9V425H716.9ZM718.9 223.6H721.9V425H718.9ZM721.9 295.7H725V425H721.9ZM725 251.9H726.9V425H725ZM726.9 223.6H731V425H726.9ZM731 305.7H733V425H731ZM733 241.9H736V425H733ZM736 222.8H739.2V425H736ZM748.8 222.8H752.1V425H748.8ZM752.1 292.4H755V425H752.1ZM755 255H757.1V425H755ZM757.1 223.6H760.1V425H757.1ZM760.1 301.6H762.9V425H760.1ZM762.9 246H765.1V425H762.9ZM765.1 223.6H769.1V425H765.1ZM769.1 311.5H771.2V425H769.1ZM771.2 334H772.4V425H771.2ZM797 392H797.8V425H797ZM797.8 250H800V425H797.8ZM800 223.6H803.1V425H800ZM803.1 307.4H806.1V425H803.1ZM806.1 240H808.1V425H806.1ZM808.1 223.6H811.1V425H808.1ZM811.1 316.5H814.1V425H811.1ZM814.1 237H816.9V425H814.1ZM816.9 223.6H820.2V425H816.9ZM829.9 223.6H833V425H829.9ZM833 303.2H836.1V425H833ZM836.1 243.9H838V425H836.1ZM838 223.6H841.1V425H838ZM841.1 312.4H844.1V425H841.1ZM844.1 234.8H846.1V425H844.1ZM846.1 225H849.1V425H846.1ZM849.1 323.2H852.9V425H849.1ZM874 292.4H877V425H874ZM877 253.9H879.8V425H877ZM879.8 223.6H882.8V425H879.8ZM882.8 302.4H886V425H882.8ZM886 245H888.1V425H886ZM888.1 223.6H891.1V425H888.1ZM891.1 311.5H894V425H891.1ZM894 241.9H896.9V425H894ZM906.1 386H906.9V425H906.1ZM906.9 258H908.9V425H906.9ZM908.9 223.6H911.9V425H908.9ZM911.9 298.2H915V425H911.9ZM915 248.9H917.7V425H915ZM917.7 223.6H921V425H917.7ZM921 308.2H923.9V425H921ZM923.9 239.7H926V425H923.9ZM926 223.6H929.2V425H926ZM953.8 304.9H957.9V425H953.8ZM957.9 243H960.1V425H957.9ZM960.1 223.6H964.1V425H960.1ZM964.1 313.5H966.2V425H964.1ZM966.2 233.9H969V425H966.2ZM969 226H972V425H969ZM972 315.7H975V425H972ZM975 231.1H978.2V425H975ZM987 390H987.8V425H987ZM987.8 246.7H990V425H987.8ZM990 223.6H993V425H990Z"/>
<path fill="#453A02" d="M48 390H50.8V424H48ZM56.6 400H59V424H56.6ZM49 289.6H49.9V325.6H49ZM57 300H57.9V342H57ZM56 345H56.9V424H56ZM89.8 379.6H92.8V424H89.8ZM98.5 389H101V424H98.5ZM90 279.6H90.9V315.6H90ZM98.8 288.6H99.7V330.6H98.8ZM97.8 333.6H98.7V424H97.8ZM120.2 376H121.9V424H120.2ZM128 385.8H131V424H128ZM128.7 285.8H129.6V321.8H128.7ZM137 295H137.9V337H137ZM136 340H136.9V424H136ZM171.2 390.8H172.9V424H171.2ZM179.2 400.8H182V424H179.2ZM171 290.8H171.9V326.8H171ZM179.9 300.7H180.8V342.7H179.9ZM178.9 345.7H179.8V424H178.9ZM200.3 385H202V424H200.3ZM208.6 396.6H211.1V424H208.6ZM216.9 405.7H220.2V424H216.9ZM208.8 296.6H209.7V332.6H208.8ZM217.9 305.7H218.8V347.7H217.9ZM216.9 350.7H217.8V424H216.9ZM250 386.6H253V424H250ZM258.8 395.8H260.8V424H258.8ZM251 285.8H251.9V321.8H251ZM258.9 295.7H259.8V337.7H258.9ZM257.9 340.7H258.8V424H257.9ZM279.9 383H282.9V424H279.9ZM288.2 391.6H291.2V424H288.2ZM281 282.5H281.9V318.5H281ZM288.8 291.6H289.7V333.6H288.8ZM287.8 336.6H288.7V424H287.8ZM331 397.4H333.9V424H331ZM339.7 400H342.2V424H339.7ZM332 297.4H332.9V333.4H332ZM340 306.5H340.9V348.5H340ZM339 351.5H339.9V424H339ZM361.3 394H364.3V424H361.3ZM369.6 403H372.1V424H369.6ZM361.1 293.3H362V329.3H361.1ZM369.9 302.4H370.8V344.4H369.9ZM368.9 347.4H369.8V424H368.9ZM402.8 382.5H404.8V424H402.8ZM411.1 393H413.6V424H411.1ZM420.2 395H422.4V424H420.2ZM410.9 292.4H411.8V328.4H410.9ZM419.7 301.6H420.6V343.6H419.7ZM418.7 346.6H419.6V424H418.7ZM440.8 389H442.5V424H440.8ZM449.1 399H452V424H449.1ZM441 288.3H441.9V324.3H441ZM449.3 298.2H450.2V340.2H449.3ZM448.3 343.2H449.2V424H448.3ZM484 394H485.7V424H484ZM492 404H494V424H492ZM500.1 407.4H502.8V424H500.1ZM492.2 303.2H493.1V339.2H492.2ZM501 305.7H501.9V347.7H501ZM500 350.7H500.9V424H500ZM521.4 400H523.6V424H521.4ZM530 410H531.9V424H530ZM522.1 299.6H523V335.6H522.1ZM530 309.5H530.9V351.5H530ZM529 354.5H529.9V424H529ZM563.3 390H565.9V424H563.3ZM571.2 399H573.7V424H571.2ZM563.9 289.6H564.8V325.6H563.9ZM571.9 299H572.8V341H571.9ZM570.9 344H571.8V424H570.9ZM592.8 385.8H594.8V424H592.8ZM601.1 395.8H604V424H601.1ZM609.8 405H611.6V424H609.8ZM602.1 295.7H603V331.7H602.1ZM610.1 304.5H611V346.5H610.1ZM609.1 349.5H610V424H609.1ZM644.2 400.8H646.6V424H644.2ZM652.5 410H654.6V424H652.5ZM644 300.7H644.9V336.7H644ZM653.1 310.7H654V352.7H653.1ZM652.1 355.7H653V424H652.1ZM674 396.6H675.7V424H674ZM682.4 407H684.9V424H682.4ZM690.7 415.7H692.8V424H690.7ZM682.2 306.5H683.1V342.5H682.2ZM691 315.7H691.9V357.7H691ZM690 360.7H690.9V424H690ZM723.9 396.6H725.5V424H723.9ZM731.9 405.7H734.7V424H731.9ZM724 295.7H724.9V331.7H724ZM732 305.7H732.9V347.7H732ZM731 350.7H731.9V424H731ZM753.8 393.3H755.4V424H753.8ZM762.1 401.6H764.1V424H762.1ZM754 292.4H754.9V328.4H754ZM761.9 301.6H762.8V343.6H761.9ZM760.9 346.6H761.8V424H760.9ZM804.5 408H806.6V424H804.5ZM812.8 410H814.9V424H812.8ZM805.1 307.4H806V343.4H805.1ZM813.1 316.5H814V358.5H813.1ZM812.1 361.5H813V424H812.1ZM834.2 404H836.6V424H834.2ZM842.5 413H844.6V424H842.5ZM835.1 303.2H836V339.2H835.1ZM843.1 312.4H844V354.4H843.1ZM842.1 357.4H843V424H842.1ZM876.2 394H877.8V424H876.2ZM884.5 403H887V424H884.5ZM892.8 405H894.8V424H892.8ZM885 302.4H885.9V338.4H885ZM893 311.5H893.9V353.5H893ZM892 356.5H892.9V424H892ZM913.9 399H916V424H913.9ZM922.2 409H924.7V424H922.2ZM914 298.2H914.9V334.2H914ZM922.9 308.2H923.8V350.2H922.9ZM921.9 353.2H922.8V424H921.9ZM956.2 405H958.7V424H956.2ZM965.4 414H967.9V424H965.4ZM972.9 417.4H975.7V424H972.9ZM965.2 313.5H966.1V349.5H965.2ZM974 315.7H974.9V357.7H974ZM973 360.7H973.9V424H973Z"/>
<rect x="44" y="424" width="950" height="1" fill="#E6C200"/><path d="M511.700 166h12.800l-6.400 12.400z" fill="#fff" shape-rendering="geometricPrecision"/><path d="M43 419L55 424.900L43 430.800z" fill="#ffd700" stroke="#fff" stroke-width="0.700" shape-rendering="geometricPrecision"/><path d="M994 419L982 424.900L994 430.800z" fill="#ffd700" stroke="#fff" stroke-width="0.700" shape-rendering="geometricPrecision"/><path d="M1007 224h6v1h-6zM1011 225h2v3h-2zM1011 232h2v2h-2zM1011 235h2v2h-2zM1011 238h2v2h-2zM1011 241h2v26h-2zM1011 268h2v2h-2zM1011 272h2v2h-2zM1011 276h2v1h-2zM1011 280h2v3h-2zM1011 286h2v1h-2zM1011 290h2v26h-2zM1011 317h2v2h-2zM1011 323h2v2h-2zM1011 329h2v3h-2zM1011 334h2v34h-2zM1011 370h2v1h-2zM1011 374h2v2h-2zM1011 379h2v3h-2zM1011 385h2v25h-2zM1011 412h2v2h-2zM1011 416h2v1h-2zM1011 419h2v5h-2zM994 424h19v1h-19z" fill="#e6c200"/></svg>
<span class="t" style="left:5.60px;top:166.40px;font-size:11px;line-height:12px;color:#ffdc00;transform:scaleX(0.9800);">2.5</span>
<span class="t" style="left:5.60px;top:216.92px;font-size:11px;line-height:12px;color:#ffdc00;transform:scaleX(0.9800);">2</span>
<span class="t" style="left:5.60px;top:267.44px;font-size:11px;line-height:12px;color:#ffdc00;transform:scaleX(0.9800);">1.5</span>
<span class="t" style="left:5.60px;top:317.96px;font-size:11px;line-height:12px;color:#ffdc00;transform:scaleX(0.9800);">1</span>
<span class="t" style="left:5.60px;top:368.48px;font-size:11px;line-height:12px;color:#ffdc00;transform:scaleX(0.9800);">0.5</span>
<span class="t" style="left:5.60px;top:419.00px;font-size:11px;line-height:12px;color:#ffdc00;transform:scaleX(0.9800);">0</span>
<span class="t" style="left:5.60px;top:469.52px;font-size:11px;line-height:12px;color:#ffdc00;transform:scaleX(0.9800);">-0.5</span>
<span class="t" style="left:5.60px;top:520.04px;font-size:11px;line-height:12px;color:#ffdc00;transform:scaleX(0.9800);">-1</span>
<span class="t" style="left:5.60px;top:570.56px;font-size:11px;line-height:12px;color:#ffdc00;transform:scaleX(0.9800);">-1.5</span>
<span class="t" style="left:5.60px;top:621.08px;font-size:11px;line-height:12px;color:#ffdc00;transform:scaleX(0.9800);">-2</span>
<span class="t" style="left:5.60px;top:671.60px;font-size:11px;line-height:12px;color:#ffdc00;transform:scaleX(0.9800);">-2.5</span>
<span class="t" style="left:33.20px;top:688.70px;font-size:11px;line-height:12px;color:#fff;transform:scaleX(0.9541);">-500 us</span>
<span class="t" style="left:127.40px;top:688.70px;font-size:11px;line-height:12px;color:#fff;transform:scaleX(0.9432);">-400 us</span>
<span class="t" style="left:221.40px;top:688.70px;font-size:11px;line-height:12px;color:#fff;transform:scaleX(0.9486);">-300 us</span>
<span class="t" style="left:315.60px;top:688.70px;font-size:11px;line-height:12px;color:#fff;transform:scaleX(0.9405);">-200 us</span>
<span class="t" style="left:409.50px;top:688.70px;font-size:11px;line-height:12px;color:#fff;transform:scaleX(0.9432);">-100 us</span>
<span class="t" style="left:502.70px;top:688.70px;font-size:11px;line-height:12px;color:#fff;transform:scaleX(0.9476);">0 us</span>
<span class="t" style="left:598.10px;top:688.70px;font-size:11px;line-height:12px;color:#fff;transform:scaleX(0.8794);">100 us</span>
<span class="t" style="left:691.30px;top:688.70px;font-size:11px;line-height:12px;color:#fff;transform:scaleX(0.9147);">200 us</span>
<span class="t" style="left:785.10px;top:688.70px;font-size:11px;line-height:12px;color:#fff;transform:scaleX(0.9206);">300 us</span>
<span class="t" style="left:879.10px;top:688.70px;font-size:11px;line-height:12px;color:#fff;transform:scaleX(0.9294);">400 us</span>
<span class="t" style="left:973.10px;top:688.70px;font-size:11px;line-height:12px;color:#fff;transform:scaleX(0.9324);">500 us</span>
<div class="b" style="left:4px;top:685px;width:28px;height:18px;background:#e1e1e1;border:1px solid #adadad;box-sizing:border-box;"></div>
<span class="t" style="left:7.90px;top:688.70px;font-size:11px;line-height:12px;color:#000;transform:scaleX(0.9375);font-weight:bold;">X</span>
<div class="b" style="left:19px;top:687px;width:1px;height:14px;background:#a0a0a0;"></div>
<svg class="b" style="left:22px;top:692px;" width="7" height="5" viewBox="0 0 7 5"><path d="M0 0h7l-3.500 4z" fill="#000"/></svg>
<svg class="b" style="left:866px;top:148px;" width="16" height="16" viewBox="0 0 16 16"><path d="M9.500 9.500l4.500 4.300" stroke="#b4b4b4" stroke-width="1.800"/><circle cx="5.800" cy="5.800" r="5" fill="#2b5fae" stroke="#d3dae2" stroke-width="1.300"/><path d="M5.200 4.200l1-.7v4.800" stroke="#fff" stroke-width="1.200" fill="none"/></svg>
<svg class="b" style="left:887px;top:148px;" width="13" height="14" viewBox="0 0 13 14"><path d="M1 1l6.500 1.800-2.300 1.200 3.300 3.600-1 1-3.400-3.600-1.200 2.400z" fill="#1e90ff"/><rect x="0" y="9" width="12.200" height="2" fill="#9a9a9a"/><rect x="0" y="11" width="12.200" height="1.500" fill="#6e6e6e"/></svg>
<svg class="b" style="left:907px;top:148px;" width="13" height="14" viewBox="0 0 13 14"><path d="M1.700 1v7.300M1.700 4.600h8.500" stroke="#1e90ff" stroke-width="1.200" fill="none"/><rect x="0" y="9" width="12.200" height="2" fill="#9a9a9a"/><rect x="0" y="11" width="12.200" height="1.500" fill="#6e6e6e"/></svg>
<svg class="b" style="left:927px;top:148px;" width="13" height="14" viewBox="0 0 13 14"><path d="M1.500 1v7.300M1.500 1.600h11M1.500 5.600h6.500" stroke="#1e90ff" stroke-width="1.200" fill="none"/><rect x="0" y="9" width="12.200" height="2" fill="#9a9a9a"/><rect x="0" y="11" width="12.200" height="1.500" fill="#6e6e6e"/></svg>
<svg class="b" style="left:950.4px;top:148px;" width="16" height="16" viewBox="0 0 16 16"><path d="M9.500 9.500l4.500 4.300" stroke="#b4b4b4" stroke-width="1.800"/><circle cx="5.800" cy="5.800" r="5" fill="#2b5fae" stroke="#d3dae2" stroke-width="1.300"/><circle cx="5.800" cy="5.800" r="2.800" fill="#5d8fd6"/><path d="M3.500 7.500h4.600" stroke="#a9c6ee" stroke-width="0.900"/></svg>
<div class="b" style="left:972px;top:147px;width:21px;height:18px;background:#e1e1e1;border:1px solid #adadad;box-sizing:border-box;"></div>
<svg class="b" style="left:975.5px;top:148.5px;" width="15" height="15" viewBox="0 0 15 15"><g transform="translate(0.3,0) scale(0.95)"><path d="M5.800 0.300h2.400l.4 1.800 1.300.55 1.600-1 1.700 1.700-1 1.600.55 1.300 1.800.4v2.400l-1.800.4-.55 1.300 1 1.600-1.700 1.700-1.600-1-1.300.55-.4 1.800H5.800l-.4-1.800-1.300-.55-1.600 1-1.700-1.700 1-1.600-.55-1.300-1.800-.4V6.650l1.800-.4.550-1.300-1-1.600 1.700-1.700 1.600 1 1.300-.55z" fill="#b4b8bd" stroke="#80868d" stroke-width="0.800"/><circle cx="7" cy="7.700" r="2.900" fill="#eceef0" stroke="#7a8087" stroke-width="0.700"/><path d="M6.200 5.200a2.800 2.800 0 0 0 0.300 5.200a3.600 3.600 0 0 1 -0.300 -5.200z" fill="#3c4650" stroke="#3c4650" stroke-width="0.900"/></g></svg>
<div class="b" style="left:995px;top:147px;width:19px;height:18px;background:#e9e9e9;border:1px solid #c4c4c4;box-sizing:border-box;"></div>
<span class="t" style="left:1001.50px;top:151.20px;font-size:11px;line-height:12px;color:#000;transform:scaleX(1.0875);font-weight:bold;">Y</span>
<div class="b" style="left:1014px;top:146px;width:185px;height:557px;background:#f0f0f0;"></div>
<div class="b" style="left:1014px;top:703px;width:185px;height:1px;background:#b4b4b4;"></div>
<div class="b" style="left:1199px;top:146px;width:4px;height:558px;background:#fff;"></div>
<div class="b" style="left:1014px;top:145px;width:185px;height:1px;background:#b4b4b4;"></div>
<div class="b" style="left:1014px;top:146px;width:185px;height:1px;background:#fff;"></div>
<div class="b" style="left:1014px;top:146px;width:1px;height:558px;background:#fff;"></div>
<svg class="b" style="left:1018px;top:153px;" width="12" height="7" viewBox="0 0 12 7"><path d="M0.500 2.500h6.500v-2l4.500 3-4.500 3v-2h-6.500z" fill="#74c95a" stroke="#4da43a" stroke-width="0.500"/></svg>
<div class="b" style="left:1017px;top:165px;width:160px;height:91px;background:#fff;"></div>
<div class="b" style="left:1021px;top:169px;width:152px;height:83px;background:#f0f0f0;"></div>
<div class="b" style="left:1021px;top:171px;width:13px;height:13px;background:#fff;border:1px solid #333;box-sizing:border-box;"></div><svg class="b" style="left:1021px;top:171px;" width="13" height="13" viewBox="0 0 13 13"><path d="M2.500 6.500l3 3 5.500-6.500" stroke="#222" stroke-width="1.200" fill="none"/></svg>
<span class="t" style="left:1038.50px;top:171.50px;font-size:11px;line-height:12px;color:#000;transform:scaleX(0.9000);">Time</span>
<div class="b" style="left:1151px;top:170px;width:21px;height:15px;background:#e1e1e1;border:1px solid #adadad;box-sizing:border-box;"></div><svg class="b" style="left:1155px;top:171px;" width="13" height="13" viewBox="0 0 13 13"><g transform="translate(0.9,0.2) scale(0.8)"><path d="M5.800 0.300h2.400l.4 1.800 1.300.55 1.600-1 1.700 1.700-1 1.600.55 1.300 1.800.4v2.400l-1.800.4-.55 1.300 1 1.600-1.700 1.700-1.600-1-1.300.55-.4 1.800H5.800l-.4-1.800-1.300-.55-1.600 1-1.700-1.700 1-1.600-.55-1.300-1.800-.4V6.650l1.800-.4.550-1.300-1-1.600 1.700-1.700 1.600 1 1.300-.55z" fill="#b4b8bd" stroke="#80868d" stroke-width="0.800"/><circle cx="7" cy="7.700" r="2.900" fill="#eceef0" stroke="#7a8087" stroke-width="0.700"/><path d="M6.200 5.200a2.800 2.800 0 0 0 0.300 5.200a3.600 3.600 0 0 1 -0.300 -5.200z" fill="#3c4650" stroke="#3c4650" stroke-width="0.900"/></g></svg>
<span class="t" style="left:1024.30px;top:190.60px;font-size:11px;line-height:12px;color:#000;transform:scaleX(0.9714);">Position:</span>
<div class="b" style="left:1082px;top:187px;width:90px;height:20px;background:#fff;border:1px solid #7a7a7a;box-sizing:border-box;"></div><span class="t" style="left:1086.70px;top:191.50px;font-size:11px;line-height:12px;color:#000;transform:scaleX(0.9067);">0 s</span><svg class="b" style="left:1158px;top:194.5px;" width="9" height="6" viewBox="0 0 9 6"><path d="M0.500 0.500l4 4 4-4" stroke="#444" stroke-width="1.100" fill="none"/></svg>
<span class="t" style="left:1024.30px;top:211.40px;font-size:11px;line-height:12px;color:#000;transform:scaleX(0.9464);">Base:</span>
<div class="b" style="left:1082px;top:208px;width:90px;height:20px;background:#fff;border:1px solid #7a7a7a;box-sizing:border-box;"></div><span class="t" style="left:1087.90px;top:212.20px;font-size:11px;line-height:12px;color:#000;transform:scaleX(0.9431);">100 us/div</span><svg class="b" style="left:1158px;top:215.5px;" width="9" height="6" viewBox="0 0 9 6"><path d="M0.500 0.500l4 4 4-4" stroke="#444" stroke-width="1.100" fill="none"/></svg>
<div class="b" style="left:1022px;top:229px;width:150px;height:21px;background:#c2dcf3;border:1px solid #99cdf5;box-sizing:border-box;"></div>
<svg class="b" style="left:1093.5px;top:233px;" width="9" height="15" viewBox="0 0 9 15"><rect x="2.500" y="0" width="4" height="10" fill="#58b548"/><rect x="3.500" y="0.500" width="2" height="9.500" fill="#a5e090"/><path d="M0.300 9.500h8.400l-4.200 5z" fill="#45a03a"/></svg>
<svg class="b" style="left:1022px;top:261px;" width="15" height="15" viewBox="0 0 15 15"><g transform="translate(0.3,0.3) scale(0.92)"><path d="M5.800 0.300h2.400l.4 1.800 1.300.55 1.600-1 1.700 1.700-1 1.600.55 1.300 1.800.4v2.400l-1.800.4-.55 1.300 1 1.600-1.700 1.700-1.600-1-1.300.55-.4 1.800H5.800l-.4-1.800-1.300-.55-1.600 1-1.700-1.700 1-1.600-.55-1.300-1.800-.4V6.650l1.800-.4.550-1.300-1-1.600 1.700-1.700 1.600 1 1.300-.55z" fill="#b4b8bd" stroke="#80868d" stroke-width="0.800"/><circle cx="7" cy="7.700" r="2.900" fill="#eceef0" stroke="#7a8087" stroke-width="0.700"/><path d="M6.200 5.200a2.800 2.800 0 0 0 0.300 5.200a3.600 3.600 0 0 1 -0.300 -5.200z" fill="#3c4650" stroke="#3c4650" stroke-width="0.900"/></g></svg>
<span class="t" style="left:1040.90px;top:263.60px;font-size:11px;line-height:12px;color:#000;transform:scaleX(0.9526);">Options</span>
<svg class="b" style="left:1163px;top:267px;" width="8" height="5" viewBox="0 0 8 5"><path d="M0 0h8l-4 4.500z" fill="#000"/></svg>
<div class="b" style="left:1018px;top:283px;width:158px;height:22px;background:#e1e1e1;border:1px solid #adadad;box-sizing:border-box;"></div>
<svg class="b" style="left:1022px;top:287px;" width="14" height="14" viewBox="0 0 14 14"><path d="M5 0.500h4v4.500h4.500v4h-4.500v4.500h-4v-4.500h-4.500v-4h4.500z" fill="#62c544" stroke="#3f9a2a" stroke-width="0.700"/></svg>
<span class="t" style="left:1041.40px;top:288.50px;font-size:11px;line-height:12px;color:#000;transform:scaleX(0.9344);">Add Channel</span>
<svg class="b" style="left:1163px;top:292px;" width="8" height="5" viewBox="0 0 8 5"><path d="M0 0h8l-4 4.500z" fill="#000"/></svg>
<div class="b" style="left:1017px;top:307px;width:160px;height:68px;background:#ffd400;"></div>
<div class="b" style="left:1021px;top:311px;width:152px;height:60px;background:#f0f0f0;"></div>
<div class="b" style="left:1021px;top:313px;width:13px;height:13px;background:#fff;border:1px solid #333;box-sizing:border-box;"></div><svg class="b" style="left:1021px;top:313px;" width="13" height="13" viewBox="0 0 13 13"><path d="M2.500 6.500l3 3 5.500-6.500" stroke="#222" stroke-width="1.200" fill="none"/></svg>
<span class="t" style="left:1038.50px;top:313.40px;font-size:11px;line-height:12px;color:#000;transform:scaleX(0.9945);">Channel 1 (1±)</span>
<div class="b" style="left:1151px;top:312px;width:21px;height:15px;background:#e1e1e1;border:1px solid #adadad;box-sizing:border-box;"></div><svg class="b" style="left:1155px;top:313px;" width="13" height="13" viewBox="0 0 13 13"><g transform="translate(0.9,0.2) scale(0.8)"><path d="M5.800 0.300h2.400l.4 1.800 1.300.55 1.600-1 1.700 1.700-1 1.600.55 1.300 1.800.4v2.400l-1.800.4-.55 1.300 1 1.600-1.700 1.700-1.600-1-1.300.55-.4 1.800H5.800l-.4-1.800-1.300-.55-1.600 1-1.700-1.700 1-1.600-.55-1.300-1.800-.4V6.650l1.800-.4.550-1.300-1-1.600 1.700-1.700 1.600 1 1.300-.55z" fill="#b4b8bd" stroke="#80868d" stroke-width="0.800"/><circle cx="7" cy="7.700" r="2.900" fill="#eceef0" stroke="#7a8087" stroke-width="0.700"/><path d="M6.200 5.200a2.800 2.800 0 0 0 0.300 5.200a3.600 3.600 0 0 1 -0.300 -5.200z" fill="#3c4650" stroke="#3c4650" stroke-width="0.900"/></g></svg>
<span class="t" style="left:1024.30px;top:332.20px;font-size:11px;line-height:12px;color:#000;transform:scaleX(1.0688);">Offset:</span>
<div class="b" style="left:1082px;top:329px;width:90px;height:20px;background:#fff;border:1px solid #7a7a7a;box-sizing:border-box;"></div><span class="t" style="left:1086.70px;top:333.40px;font-size:11px;line-height:12px;color:#000;transform:scaleX(0.8000);">0 V</span><svg class="b" style="left:1158px;top:336.5px;" width="9" height="6" viewBox="0 0 9 6"><path d="M0.500 0.500l4 4 4-4" stroke="#444" stroke-width="1.100" fill="none"/></svg>
<span class="t" style="left:1024.30px;top:353.30px;font-size:11px;line-height:12px;color:#000;transform:scaleX(0.9500);">Range:</span>
<div class="b" style="left:1082px;top:350px;width:90px;height:20px;background:#fff;border:1px solid #7a7a7a;box-sizing:border-box;"></div><span class="t" style="left:1087.60px;top:354.60px;font-size:11px;line-height:12px;color:#000;transform:scaleX(0.9107);">500 mV/div</span><svg class="b" style="left:1158px;top:357.5px;" width="9" height="6" viewBox="0 0 9 6"><path d="M0.500 0.500l4 4 4-4" stroke="#444" stroke-width="1.100" fill="none"/></svg>
<div class="b" style="left:1017px;top:376px;width:160px;height:25px;background:#00b4ff;"></div>
<div class="b" style="left:1021px;top:380px;width:152px;height:17px;background:#f0f0f0;"></div>
<div class="b" style="left:1021px;top:382px;width:13px;height:13px;background:#fff;border:1px solid #333;box-sizing:border-box;"></div>
<span class="t" style="left:1038.50px;top:382.40px;font-size:11px;line-height:12px;color:#000;transform:scaleX(0.9945);">Channel 2 (2±)</span>
<div class="b" style="left:1151px;top:381px;width:21px;height:15px;background:#e1e1e1;border:1px solid #adadad;box-sizing:border-box;"></div><svg class="b" style="left:1155px;top:382px;" width="13" height="13" viewBox="0 0 13 13"><g transform="translate(0.9,0.2) scale(0.8)"><path d="M5.800 0.300h2.400l.4 1.800 1.300.55 1.600-1 1.700 1.700-1 1.600.55 1.300 1.800.4v2.400l-1.800.4-.55 1.300 1 1.600-1.700 1.700-1.600-1-1.300.55-.4 1.800H5.800l-.4-1.800-1.300-.55-1.600 1-1.700-1.700 1-1.600-.55-1.300-1.800-.4V6.650l1.800-.4.550-1.300-1-1.600 1.700-1.700 1.600 1 1.300-.55z" fill="#b4b8bd" stroke="#80868d" stroke-width="0.800"/><circle cx="7" cy="7.700" r="2.900" fill="#eceef0" stroke="#7a8087" stroke-width="0.700"/><path d="M6.200 5.200a2.800 2.800 0 0 0 0.300 5.200a3.600 3.600 0 0 1 -0.300 -5.200z" fill="#3c4650" stroke="#3c4650" stroke-width="0.900"/></g></svg>
<div class="b" style="left:1180px;top:164px;width:1px;height:540px;background:#fafafa;"></div>
<svg class="b" style="left:1185px;top:170px;" width="8" height="6" viewBox="0 0 8 6"><path d="M0.500 5l3.500-3.500 3.500 3.500" stroke="#b0b0b0" stroke-width="1.200" fill="none"/></svg>
<svg class="b" style="left:1185px;top:691px;" width="8" height="6" viewBox="0 0 8 6"><path d="M0.500 1l3.500 3.500 3.500-3.500" stroke="#b0b0b0" stroke-width="1.200" fill="none"/></svg>
<div class="b" style="left:1px;top:704px;width:1202px;height:3px;background:#fff;"></div>
<div class="b" style="left:1px;top:707px;width:1202px;height:25px;background:#f0f0f0;"></div>
<div class="b" style="left:821px;top:710px;width:1px;height:20px;background:#fcfcfc;"></div>
<div class="b" style="left:827px;top:712px;width:82px;height:17px;background:#e1e1e1;border:1px solid #adadad;box-sizing:border-box;"></div>
<span class="t" style="left:831.90px;top:714.40px;font-size:11px;line-height:12px;color:#000;transform:scaleX(0.9432);">Manual Trigger</span>
<div class="b" style="left:911px;top:710px;width:1px;height:20px;background:#fcfcfc;"></div>
<div class="b" style="left:917px;top:712px;width:151px;height:17px;background:#e1e1e1;border:1px solid #adadad;box-sizing:border-box;"></div>
<span class="t" style="left:921.50px;top:714.40px;font-size:11px;line-height:12px;color:#000;transform:scaleX(0.9685);">Discovery SN:210244516192</span>
<div class="b" style="left:1071px;top:710px;width:1px;height:20px;background:#fcfcfc;"></div>
<div class="b" style="left:1075px;top:712px;width:21px;height:17px;background:#e1e1e1;border:1px solid #adadad;box-sizing:border-box;"></div>
<svg class="b" style="left:1078px;top:715px;" width="16" height="12" viewBox="0 0 16 12"><path d="M3.500 1.500h11l-3 6h-11z" fill="#c4c4c4" stroke="#777" stroke-width="0.800"/><path d="M0.500 7.500v2h11l3-6v-2" fill="#9a9a9a" stroke="#777" stroke-width="0.800"/></svg>
<div class="b" style="left:1099px;top:710px;width:1px;height:20px;background:#fcfcfc;"></div>
<div class="b" style="left:1104px;top:712px;width:78px;height:17px;background:#e1e1e1;border:1px solid #adadad;box-sizing:border-box;"></div>
<span class="t" style="left:1116.50px;top:714.70px;font-size:11px;line-height:12px;color:#000;transform:scaleX(0.9685);">Status: OK</span>
<svg class="b" style="left:1174px;top:723px;" width="5" height="3" viewBox="0 0 5 3"><path d="M0 0h5l-2.500 3z" fill="#000"/></svg>
<div class="b" style="left:1184px;top:710px;width:1px;height:20px;background:#fcfcfc;"></div>
<svg class="b" style="left:1192px;top:722px;" width="9" height="9" viewBox="0 0 9 9"><g fill="#b5b5b5"><rect x="6" y="0" width="2" height="2"/><rect x="3" y="3" width="2" height="2"/><rect x="6" y="3" width="2" height="2"/><rect x="0" y="6" width="2" height="2"/><rect x="3" y="6" width="2" height="2"/><rect x="6" y="6" width="2" height="2"/></g></svg>
</body></html>
